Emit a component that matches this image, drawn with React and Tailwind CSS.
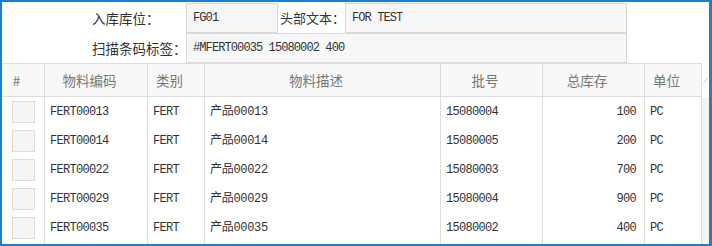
import React from 'react';

const rows = [
  { code: 'FERT00013', type: 'FERT', desc: '产品00013', batch: '15080004', qty: 100, unit: 'PC' },
  { code: 'FERT00014', type: 'FERT', desc: '产品00014', batch: '15080005', qty: 200, unit: 'PC' },
  { code: 'FERT00022', type: 'FERT', desc: '产品00022', batch: '15080003', qty: 700, unit: 'PC' },
  { code: 'FERT00029', type: 'FERT', desc: '产品00029', batch: '15080004', qty: 900, unit: 'PC' },
  { code: 'FERT00035', type: 'FERT', desc: '产品00035', batch: '15080002', qty: 400, unit: 'PC' },
];

const cols = 'grid grid-cols-[43px_103px_57px_236px_102px_102px_57px]';
const headers = ['#', '物料编码', '类别', '物料描述', '批号', '总库存', '单位'];

const sans = { fontFamily: '"Noto Sans CJK SC", "Noto Sans", sans-serif' };
const mono = { fontFamily: '"Liberation Mono", "Noto Sans CJK SC", monospace' };

export default function App() {
  return (
    <div className="w-[712px] h-[246px] bg-white border-2 border-r-[3px] border-[#1b7fd4] flex flex-col overflow-hidden">
      {/* 表单区 */}
      <div className="h-[61px] pl-[90px] flex flex-col text-[13.5px] text-[#333]" style={sans}>
        <div className="mt-[1px] h-[30px] flex items-center">
          <div className="w-[94px] shrink-0 whitespace-nowrap">入库库位：</div>
          <div className="w-[92px] shrink-0 h-full border border-[#d9d9d9] bg-[#f7f7f7] flex items-center pl-[6px] text-[12px] tracking-[-0.9px]" style={mono}>FG01</div>
          <div className="w-[67px] shrink-0 pl-[2px] whitespace-nowrap text-[13px]">头部文本：</div>
          <div className="w-[282px] shrink-0 h-full border border-[#d9d9d9] bg-[#f7f7f7] flex items-center pl-[6px] text-[12px] tracking-[-0.9px]" style={mono}>FOR TEST</div>
        </div>
        <div className="h-[30px] flex items-center">
          <div className="w-[94px] shrink-0 whitespace-nowrap">扫描条码标签：</div>
          <div className="w-[441px] shrink-0 h-full border border-[#d9d9d9] bg-[#f7f7f7] flex items-center pl-[6px] text-[12px] tracking-[-0.9px]" style={mono}>#MFERT00035 15080002 400</div>
        </div>
      </div>

      {/* 表格区 */}
      <div className="flex-1 flex">
        <div className="w-[700px] flex flex-col">
          <div className={`${cols} h-[34px] border-y border-[#dcdcdc] bg-[#f8f8f8] text-[13.5px] text-[#777]`} style={sans}>
            {headers.map((h) => (
              <div key={h} className="border-r border-[#dcdcdc] flex items-center justify-center pr-[13px]">{h}</div>
            ))}
          </div>
          <div className={`${cols} flex-1 text-[12px] tracking-[-0.7px] text-[#333]`} style={mono}>
            {[0, 1, 2, 3, 4, 5, 6].map((c) => (
              <div key={c} className="border-r border-[#dcdcdc] flex flex-col">
                {rows.map((r, i) => (
                  <div key={i} className={`h-[29px] flex items-center ${c === 5 ? 'justify-end pr-[8px]' : c === 0 ? 'pl-[10px]' : 'pl-[5px]'}`}>
                    {c === 0 && <div className="w-[23px] h-[22px] border border-[#dcdcdc] bg-[#f5f5f5]" />}
                    {c === 1 && r.code}
                    {c === 2 && r.type}
                    {c === 3 && <span className="tracking-[-0.3px]">{r.desc}</span>}
                    {c === 4 && r.batch}
                    {c === 5 && r.qty}
                    {c === 6 && r.unit}
                  </div>
                ))}
              </div>
            ))}
          </div>
        </div>
        <div className="flex-1 bg-[#f4f4f4] flex flex-col">
          <div className="h-[34px] bg-white flex items-center justify-center">
            <svg width="5" height="7" viewBox="0 0 5 7">
              <line x1="0.5" y1="6.5" x2="4.5" y2="1" stroke="#c8c8c8" strokeWidth="1" />
            </svg>
          </div>
        </div>
      </div>
    </div>
  );
}
